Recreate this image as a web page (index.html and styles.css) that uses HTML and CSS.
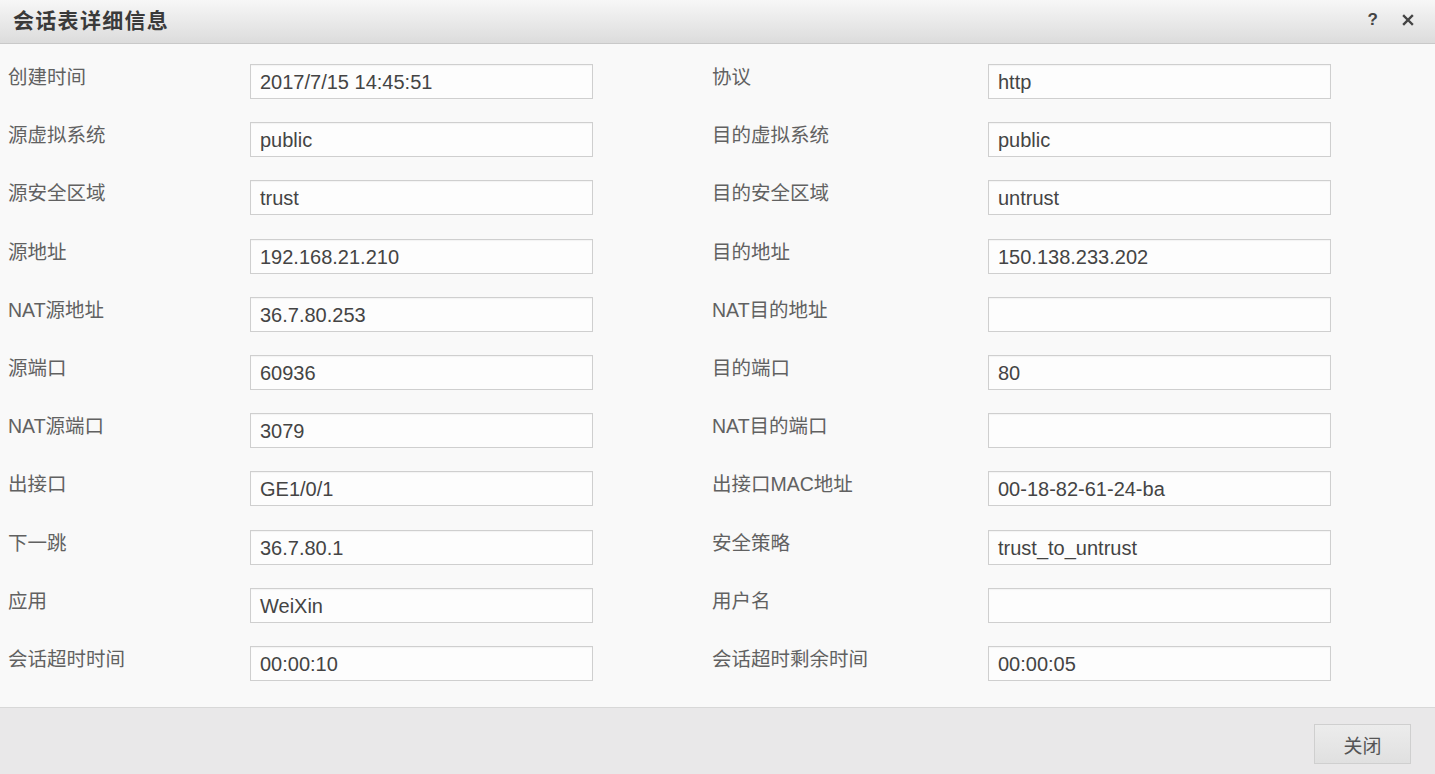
FILE: index.html
```html
<!DOCTYPE html>
<html lang="zh-CN">
<head>
<meta charset="utf-8">
<title>会话表详细信息</title>
<link rel="stylesheet" href="styles.css">
</head>
<body>
<div class="dialog">
  <div class="header">
    <div class="title">会话表详细信息</div>
    <div class="tools">
      <span class="help">?</span>
      <svg class="close-x" width="12" height="12" viewBox="0 0 12 12"><path d="M2 2 L10 10 M10 2 L2 10" stroke="#444" stroke-width="2.4" stroke-linecap="square"/></svg>
    </div>
  </div>
  <div class="body">
    <div class="label">创建时间</div><div class="field">2017/7/15 14:45:51</div>
    <div class="label">协议</div><div class="field">http</div>

    <div class="label">源虚拟系统</div><div class="field">public</div>
    <div class="label">目的虚拟系统</div><div class="field">public</div>

    <div class="label">源安全区域</div><div class="field">trust</div>
    <div class="label">目的安全区域</div><div class="field">untrust</div>

    <div class="label">源地址</div><div class="field">192.168.21.210</div>
    <div class="label">目的地址</div><div class="field">150.138.233.202</div>

    <div class="label">NAT源地址</div><div class="field">36.7.80.253</div>
    <div class="label">NAT目的地址</div><div class="field"></div>

    <div class="label">源端口</div><div class="field">60936</div>
    <div class="label">目的端口</div><div class="field">80</div>

    <div class="label">NAT源端口</div><div class="field">3079</div>
    <div class="label">NAT目的端口</div><div class="field"></div>

    <div class="label">出接口</div><div class="field">GE1/0/1</div>
    <div class="label">出接口MAC地址</div><div class="field">00-18-82-61-24-ba</div>

    <div class="label">下一跳</div><div class="field">36.7.80.1</div>
    <div class="label">安全策略</div><div class="field">trust_to_untrust</div>

    <div class="label">应用</div><div class="field">WeiXin</div>
    <div class="label">用户名</div><div class="field"></div>

    <div class="label">会话超时时间</div><div class="field">00:00:10</div>
    <div class="label">会话超时剩余时间</div><div class="field">00:00:05</div>
  </div>
  <div class="footer">
    <button class="btn">关闭</button>
  </div>
</div>
</body>
</html>
```
FILE: styles.css
```css
html, body {
  margin: 0;
  padding: 0;
}
body {
  width: 1435px;
  height: 774px;
  overflow: hidden;
  font-family: "Liberation Sans", "Noto Sans CJK SC", sans-serif;
  background: #f9f9f9;
}
.dialog {
  display: flex;
  flex-direction: column;
  height: 774px;
}
.header {
  height: 43px;
  flex: none;
  display: flex;
  align-items: center;
  justify-content: space-between;
  padding: 0 21px 0 13px;
  background: linear-gradient(#f7f7f7, #dcdcdc);
  border-bottom: 1px solid #c9c9c9;
}
.title {
  font-size: 21px;
  font-weight: bold;
  color: #3a3a3a;
  letter-spacing: 1.3px;
  margin-top: -6px;
}
.tools {
  display: flex;
  align-items: center;
  gap: 24px;
  margin-top: -4px;
}
.help {
  font-size: 17px;
  font-weight: bold;
  color: #444;
}
.body {
  flex: 1;
  display: grid;
  grid-template-columns: 242px 462px 276px 343px;
  grid-auto-rows: 35px;
  row-gap: 23.2px;
  padding: 20px 0 0 8px;
  align-content: start;
  background: #f9f9f9;
}
.label {
  font-size: 19.5px;
  line-height: 26px;
  color: #616161;
  white-space: nowrap;
}
.field {
  width: 343px;
  height: 35px;
  box-sizing: border-box;
  border: 1px solid #cfcfcf;
  background: #fdfdfd;
  box-shadow: inset 0 1px 1px rgba(0,0,0,0.04);
  padding-left: 9px;
  font-size: 20px;
  line-height: 34px;
  color: #444;
  white-space: nowrap;
}
.footer {
  height: 67px;
  flex: none;
  background: #e9e8e9;
  border-top: 1px solid #d8d8d8;
  display: flex;
  justify-content: flex-end;
  align-items: flex-start;
  padding: 16px 24px 0 0;
  box-sizing: border-box;
}
.btn {
  width: 97px;
  height: 40px;
  border: 1px solid #cfcfcf;
  background: linear-gradient(#ececec, #e0e0e0);
  font-family: "Liberation Sans", "Noto Sans CJK SC", sans-serif;
  font-size: 19px;
  color: #555;
  padding: 0;
}
```
